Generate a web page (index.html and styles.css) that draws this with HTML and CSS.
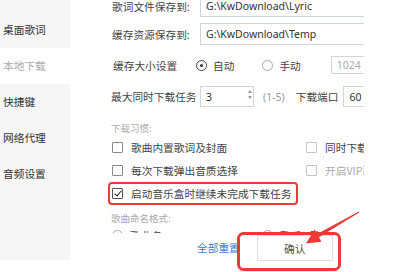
FILE: index.html
```html
<!DOCTYPE html>
<html lang="zh-CN">
<head>
<meta charset="utf-8">
<title>下载设置</title>
<link rel="stylesheet" href="styles.css">
</head>
<body>
<div class="app">
  <aside class="sidebar">
    <div class="nav-item">桌面歌词</div>
    <div class="nav-item active">本地下载</div>
    <div class="nav-item">快捷键</div>
    <div class="nav-item">网络代理</div>
    <div class="nav-item">音频设置</div>
  </aside>
  <main class="panel">
    <div class="scroll">
      <div class="content">
        <div class="row row-path">
          <span class="lbl">歌词文件保存到:</span>
          <div class="input path">G:\KwDownload\Lyric</div>
        </div>
        <div class="row row-path row-second">
          <span class="lbl">缓存资源保存到:</span>
          <div class="input path">G:\KwDownload\Temp</div>
        </div>
        <div class="row row-cache">
          <span class="lbl lbl-cache">缓存大小设置</span>
          <span class="radio on"></span><span class="opt">自动</span>
          <span class="radio off gap-radio"></span><span class="opt">手动</span>
          <div class="input size">1024</div>
        </div>
        <div class="row row-task">
          <span class="lbl lbl-task">最大同时下载任务</span>
          <div class="input spin">3<span class="spin-btns"><i class="up"></i><i class="down"></i></span></div>
          <span class="hint">(1-5)</span>
          <span class="port-lbl">下载端口</span>
          <div class="input port">60</div>
        </div>
        <div class="section-title habit">下载习惯:</div>
        <div class="checks">
          <div class="check"><span class="box"></span><span>歌曲内置歌词及封面</span></div>
          <div class="check"><span class="box light"></span><span>同时下载歌曲MV</span></div>
          <div class="check"><span class="box"></span><span>每次下载弹出音质选择</span></div>
          <div class="check dim"><span class="box light"></span><span>开启VIP歌曲下载</span></div>
          <div class="check"><span class="box checked"></span><span>启动音乐盒时继续未完成下载任务</span></div>
        </div>
        <div class="section-title naming">歌曲命名格式:</div>
        <div class="row row-naming">
          <span class="radio off"></span><span class="opt">歌曲名</span>
          <span class="radio off gap-name"></span><span class="opt">歌手 - 歌名</span>
        </div>
      </div>
    </div>
    <footer class="footer">
      <a class="reset">全部重置</a>
      <button class="ok">确认</button>
    </footer>
  </main>
</div>
<svg class="annot" width="406" height="272" viewBox="0 0 406 272">
  <rect x="109" y="183" width="188" height="21" rx="3" fill="none" stroke="#ec3a36" stroke-width="2"/>
  <rect x="238.5" y="233.5" width="101" height="36" rx="5" fill="none" stroke="#ec3a36" stroke-width="3"/>
  <polygon points="359.2,212.4 319,237.3 321.4,241.7 306,243.5 314.6,229.5 317,233.9 358.8,211.6" fill="#ec3a36"/>
</svg>
</body>
</html>
```

FILE: styles.css
```css
html, body {
  margin: 0;
  padding: 0;
  background: #ffffff;
}

body {
  width: 406px;
  height: 272px;
  overflow: hidden;
  position: relative;
  font-family: "Noto Sans CJK SC", "Noto Sans", sans-serif;
  font-size: 10.7px;
  color: #444;
}

.app {
  display: flex;
  align-items: flex-start;
}

.sidebar {
  width: 70px;
  height: 260px;
  background: #f6f6f6;
  padding-top: 12px;
  box-sizing: border-box;
  flex: none;
}

.nav-item {
  height: 36px;
  line-height: 36px;
  padding-left: 3px;
  color: #333;
}

.nav-item.active {
  background: #ffffff;
  color: #aaa;
}

.panel {
  width: 294px;
  flex: none;
  overflow: hidden;
}

.scroll {
  height: 233px;
  overflow: hidden;
}

.content {
  margin-top: -5px;
  padding-left: 42px;
  width: 360px;
}

.row {
  display: flex;
  align-items: center;
  white-space: nowrap;
}

.row-path {
  height: 22px;
}

.row-second {
  margin-top: 6px;
}

.lbl {
  width: 88px;
  flex: none;
}

.input {
  box-sizing: border-box;
  border: 1px solid #cfd5dd;
  background: #fff;
  display: flex;
  align-items: center;
  padding-left: 5px;
  color: #333;
  font-family: "Noto Sans", sans-serif;
  font-size: 10.5px;
  flex: none;
}

.path {
  width: 180px;
  height: 22px;
}

.row-cache {
  height: 20px;
  margin-top: 10px;
}

.lbl-cache {
  width: 83px;
  margin-left: 1px;
}

.radio {
  width: 11px;
  height: 11px;
  box-sizing: border-box;
  border-radius: 50%;
  border: 1px solid #aaa;
  background: #fff;
  flex: none;
  position: relative;
  margin-right: 6px;
}

.radio.on {
  border-color: #444;
}

.radio.on::after {
  content: "";
  position: absolute;
  left: 3px;
  top: 3px;
  width: 3px;
  height: 3px;
  border-radius: 50%;
  background: #333;
}

.opt {
  color: #444;
}

.gap-radio {
  margin-left: 28px;
}

.size {
  width: 50px;
  height: 18px;
  margin-left: 30px;
  color: #aaa;
}

.row-task {
  height: 21px;
  margin-top: 11px;
}

.lbl-task {
  width: 89px;
  margin-left: -1px;
}

.spin {
  width: 54px;
  height: 21px;
  position: relative;
}

.spin-btns {
  position: absolute;
  right: 1px;
  top: 3px;
  display: flex;
  flex-direction: column;
  gap: 3px;
}

.spin-btns i {
  display: block;
  width: 0;
  height: 0;
  border-left: 2.5px solid transparent;
  border-right: 2.5px solid transparent;
}

.spin-btns .up {
  border-bottom: 3px solid #999;
}

.spin-btns .down {
  border-top: 3px solid #999;
}

.hint {
  margin-left: 9px;
  color: #999;
  font-family: "Noto Sans", sans-serif;
  font-size: 10.5px;
}

.port-lbl {
  margin-left: 11px;
  color: #444;
}

.port {
  width: 40px;
  height: 21px;
  margin-left: 5px;
}

.section-title {
  height: 12px;
  line-height: 12px;
  font-size: 9.5px;
  color: #aaa;
  margin-left: -1px;
}

.habit {
  margin-top: 15px;
}

.checks {
  margin-top: 6px;
  display: grid;
  grid-template-columns: 194px auto;
  row-gap: 8px;
}

.check {
  display: flex;
  align-items: center;
  height: 15px;
  white-space: nowrap;
  color: #444;
}

.check.dim {
  color: #aaa;
}

.box {
  width: 11px;
  height: 11px;
  box-sizing: border-box;
  border: 1px solid #8a8a8a;
  border-radius: 1px;
  background: #fff;
  margin-right: 8px;
  flex: none;
  position: relative;
}

.box.light {
  border-color: #c4c4c4;
}

.box.checked {
  border-color: #555;
}

.box.checked::after {
  content: "";
  position: absolute;
  left: 3px;
  top: 0px;
  width: 3px;
  height: 6px;
  border-right: 1.5px solid #222;
  border-bottom: 1.5px solid #222;
  transform: rotate(40deg);
}

.naming {
  margin-top: 11px;
}

.row-naming {
  height: 15px;
  margin-top: 4px;
}

.row-naming .radio {
  margin-right: 7px;
}

.gap-name {
  margin-left: 100px;
}

.footer {
  height: 39px;
  display: flex;
  align-items: flex-start;
  padding-top: 2px;
  box-sizing: border-box;
}

.reset {
  margin-left: 127px;
  line-height: 26px;
  color: #3a7bd5;
  cursor: pointer;
}

.ok {
  margin-left: 17px;
  width: 76px;
  height: 26px;
  border: 1px solid #e0e0e0;
  background: #fff;
  font-family: "Noto Sans CJK SC", "Noto Sans", sans-serif;
  font-size: 10.7px;
  font-weight: 400;
  color: #555;
  padding: 0;
}

.annot {
  position: absolute;
  left: 0;
  top: 0;
  pointer-events: none;
}
```
